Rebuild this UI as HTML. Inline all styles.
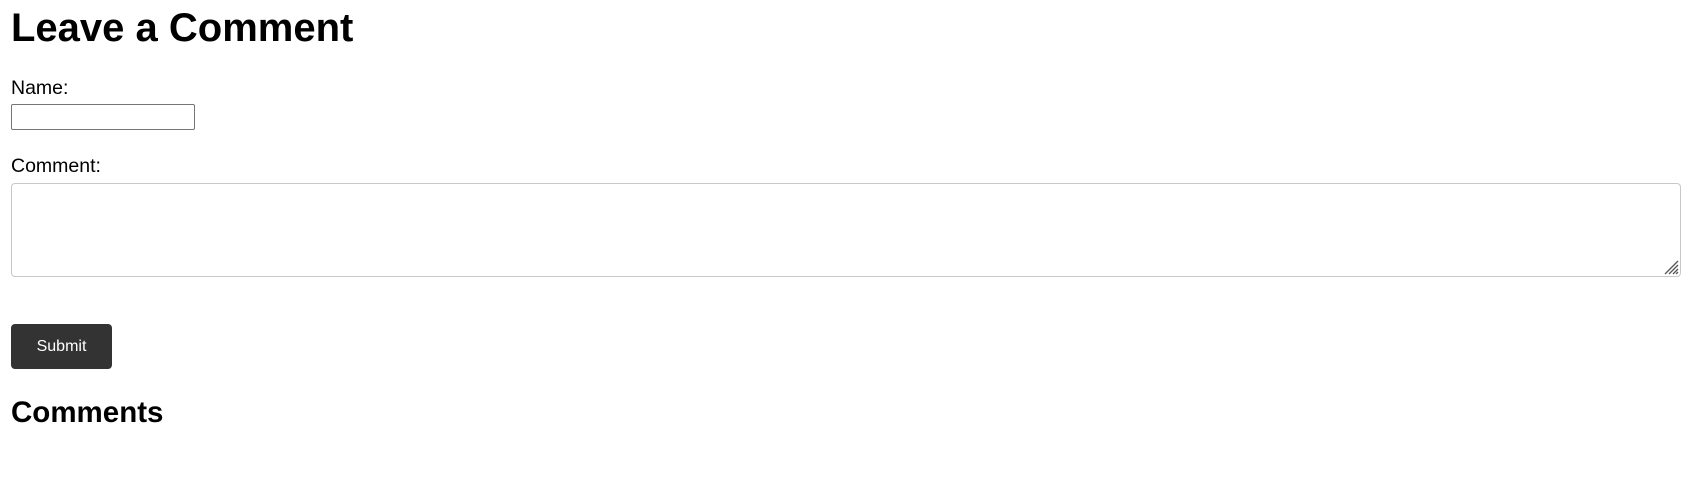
<!DOCTYPE html>
<html><head><style>
body{margin:0;width:1694px;height:499px;background:#fff;font-family:"Liberation Sans",Arial,sans-serif;color:#000;position:relative;overflow:hidden}
.a{position:absolute;white-space:nowrap}
h1{margin:0;font-size:40px;font-weight:bold;left:11px;top:6px}
h2{margin:0;font-size:29.5px;font-weight:bold;left:11px;top:396px}
.l{font-size:19.5px;left:11px}
.in{left:11px;top:104px;width:184px;height:26px;border:1px solid #767676;border-radius:2px;box-sizing:border-box}
.ta{left:11px;top:183px;width:1670px;height:94px;border:1px solid #c8c8c8;border-radius:4px;box-sizing:border-box}
.btn{left:11px;top:324px;width:101px;height:45px;background:#333;border-radius:4px;color:#fff;font-size:16px;line-height:46px;text-align:center}
</style></head><body>
<h1 class="a">Leave a Comment</h1>
<div class="a l" style="top:77px">Name:</div>
<div class="a in"></div>
<div class="a l" style="top:155px">Comment:</div>
<div class="a ta"><svg style="position:absolute;right:1px;bottom:1px" width="18" height="18"><path d="M17 4L4 17M17 8L8 17M17 12L12 17M17 15L15 17" stroke="#555" stroke-width="1.3"/></svg></div>
<div class="a btn">Submit</div>
<h2 class="a">Comments</h2>
</body></html>
